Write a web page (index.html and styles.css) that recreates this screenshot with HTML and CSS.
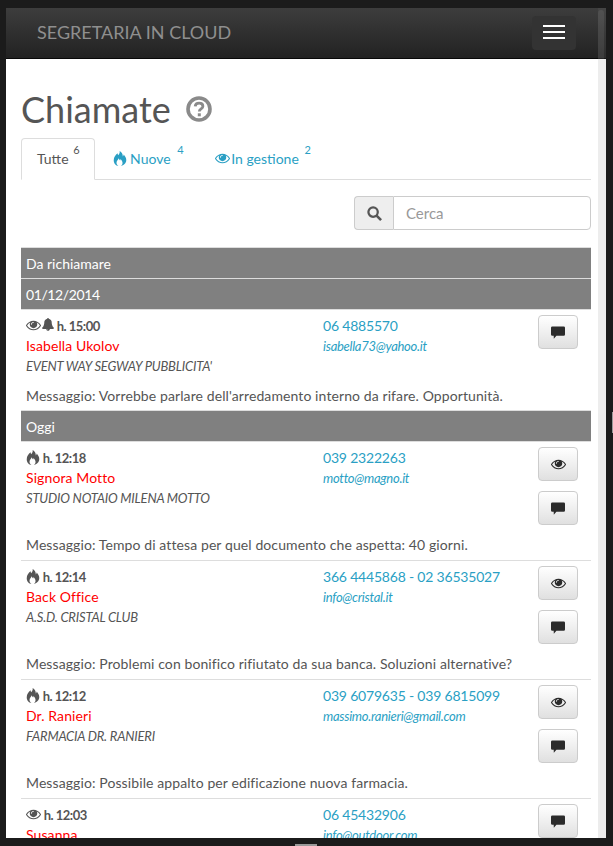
FILE: index.html
```html
<!DOCTYPE html>
<html lang="it">
<head>
    <meta charset="UTF-8">
    <meta name="viewport" content="width=device-width, initial-scale=1.0">
    <title>Segretaria in Cloud - Chiamate</title>
    <link rel="stylesheet" href="styles.css">
</head>
<body>
    <svg class="sprite" xmlns="http://www.w3.org/2000/svg">
        <symbol id="i-eye" viewBox="0 256 1792 1280">
            <path d="M1664 960q-152-236-381-353 61 104 61 225 0 185-131.5 316.5t-316.5 131.5-316.5-131.5-131.5-316.5q0-121 61-225-229 117-381 353 133 205 333.5 326.5t434.5 121.5 434.5-121.5 333.5-326.5zm-720-384q0-20-14-34t-34-14q-125 0-214.5 89.5t-89.5 214.5q0 20 14 34t34 14 34-14 14-34q0-86 61-147t147-61q20 0 34-14t14-34zm848 384q0 34-20 69-140 230-376.5 368.5t-499.5 138.5-499.5-139-376.5-368q-20-35-20-69t20-69q140-229 376.5-368t499.5-139 499.5 139 376.5 368q20 35 20 69z"/>
        </symbol>
        <symbol id="i-bell" viewBox="64 64 1664 1728">
            <path d="M912 1696q0-16-16-16-59 0-101.5-42.5t-42.5-101.5q0-16-16-16t-16 16q0 73 51.5 124.5t124.5 51.5q16 0 16-16zm816-288q0 52-38 90t-90 38h-448q0 106-75 181t-181 75-181-75-75-181h-448q-52 0-90-38t-38-90q50-42 91-88t85-119.5 74.5-158.5 50-206 19.5-260q0-152 117-282.5t307-158.5q-8-19-8-39 0-40 28-68t68-28 68 28 28 68q0 20-8 39 190 28 307 158.5t117 282.5q0 139 19.5 260t50 206 74.5 158.5 85 119.5 91 88z"/>
        </symbol>
        <symbol id="i-fire" viewBox="0 0 14 16">
            <path fill-rule="evenodd" d="M6.6 0c.5 2-.4 3.2-1.5 4.4C4.600 3.800 4.400 3.200 4.500 2.400 2.300 4.100.3 6.600.3 9.900.3 13.400 2.700 16 5.300 16c-1.300-1-2-2.200-2-3.500 0-1.900 1.500-3 2.300-4.800.3 1.200 1 1.600 1.500 2.500.3-.5.400-1 .3-1.700 1.600 1.400 2.300 2.700 2.300 4.200 0 1.300-.7 2.400-1.900 3.300 3-.4 5.900-2.800 5.900-6.300 0-2.600-1.500-4.300-2.700-5.900-.1.900-.4 1.500-1 2C10.100 3.500 8.800 1.200 6.600 0z"/>
        </symbol>
        <symbol id="i-comment" viewBox="0 0 16 14">
            <path d="M1.500 0h13A1.500 1.500 0 0 1 16 1.500v7.700a1.500 1.500 0 0 1-1.500 1.500H6.200L3.200 14l-.1-3.300H1.500A1.500 1.500 0 0 1 0 9.200V1.500A1.500 1.500 0 0 1 1.500 0z"/>
        </symbol>
    </svg>

    <div class="window">
        <nav class="navbar">
            <a class="brand" href="#">Segretaria in Cloud</a>
            <button class="navbar-toggle" type="button">
                <span class="icon-bar"></span>
                <span class="icon-bar"></span>
                <span class="icon-bar"></span>
            </button>
        </nav>

        <div class="container">
            <h1 class="page-title">
                Chiamate
                <svg class="help-icon" viewBox="0 0 26 26">
                    <circle cx="13" cy="13" r="11" fill="none" stroke="currentColor" stroke-width="3.600"/>
                    <path d="M9.200 10.400c.2-2.100 1.800-3.200 3.900-3.200 2.200 0 3.800 1.200 3.800 3 0 2.700-3.600 2.600-3.600 5.200" fill="none" stroke="currentColor" stroke-width="2.800"/>
                    <rect x="11.800" y="17.300" width="3" height="3"/>
                </svg>
            </h1>

            <ul class="tabs">
                <li class="tab active"><a href="#">Tutte <sup>6</sup></a></li>
                <li class="tab tab-new"><a href="#"><svg class="icon"><use href="#i-fire"/></svg> Nuove <sup>4</sup></a></li>
                <li class="tab tab-managed"><a href="#"><svg class="icon icon-eye"><use href="#i-eye"/></svg> In gestione <sup>2</sup></a></li>
            </ul>

            <div class="search-row">
                <div class="search-group">
                    <span class="search-addon">
                        <svg viewBox="0 0 16 16" width="15" height="15">
                            <circle cx="6.500" cy="6.500" r="5" fill="none" stroke="currentColor" stroke-width="2.400"/>
                            <path d="M10.200 10.200 15 15" fill="none" stroke="currentColor" stroke-width="2.800"/>
                        </svg>
                    </span>
                    <input class="search-input" type="text" placeholder="Cerca">
                </div>
            </div>

            <div class="call-list">
                <div class="section-head">Da richiamare</div>
                <div class="section-head section-date">01/12/2014</div>

                <div class="call call-single">
                    <div class="call-info">
                        <div class="call-time"><svg class="icon icon-eye"><use href="#i-eye"/></svg><svg class="icon icon-bell"><use href="#i-bell"/></svg> h. 15:00</div>
                        <div class="call-name">Isabella Ukolov</div>
                        <div class="call-company">EVENT WAY SEGWAY PUBBLICITA'</div>
                    </div>
                    <div class="call-contact">
                        <a class="call-phone" href="#">06 4885570</a>
                        <a class="call-mail" href="#">isabella73@yahoo.it</a>
                    </div>
                    <div class="call-actions">
                        <button class="btn" type="button"><svg class="btn-comment"><use href="#i-comment"/></svg></button>
                    </div>
                    <p class="call-message">Messaggio: Vorrebbe parlare dell'arredamento interno da rifare. Opportunità.</p>
                </div>

                <div class="section-head">Oggi</div>

                <div class="call">
                    <div class="call-info">
                        <div class="call-time"><svg class="icon"><use href="#i-fire"/></svg> h. 12:18</div>
                        <div class="call-name">Signora Motto</div>
                        <div class="call-company">STUDIO NOTAIO MILENA MOTTO</div>
                    </div>
                    <div class="call-contact">
                        <a class="call-phone" href="#">039 2322263</a>
                        <a class="call-mail" href="#">motto@magno.it</a>
                    </div>
                    <div class="call-actions">
                        <button class="btn" type="button"><svg class="btn-eye"><use href="#i-eye"/></svg></button>
                        <button class="btn" type="button"><svg class="btn-comment"><use href="#i-comment"/></svg></button>
                    </div>
                    <p class="call-message">Messaggio: Tempo di attesa per quel documento che aspetta: 40 giorni.</p>
                </div>

                <div class="call">
                    <div class="call-info">
                        <div class="call-time"><svg class="icon"><use href="#i-fire"/></svg> h. 12:14</div>
                        <div class="call-name">Back Office</div>
                        <div class="call-company">A.S.D. CRISTAL CLUB</div>
                    </div>
                    <div class="call-contact">
                        <a class="call-phone" href="#">366 4445868 - 02 36535027</a>
                        <a class="call-mail" href="#">info@cristal.it</a>
                    </div>
                    <div class="call-actions">
                        <button class="btn" type="button"><svg class="btn-eye"><use href="#i-eye"/></svg></button>
                        <button class="btn" type="button"><svg class="btn-comment"><use href="#i-comment"/></svg></button>
                    </div>
                    <p class="call-message">Messaggio: Problemi con bonifico rifiutato da sua banca. Soluzioni alternative?</p>
                </div>

                <div class="call">
                    <div class="call-info">
                        <div class="call-time"><svg class="icon"><use href="#i-fire"/></svg> h. 12:12</div>
                        <div class="call-name">Dr. Ranieri</div>
                        <div class="call-company">FARMACIA DR. RANIERI</div>
                    </div>
                    <div class="call-contact">
                        <a class="call-phone" href="#">039 6079635 - 039 6815099</a>
                        <a class="call-mail" href="#">massimo.ranieri@gmail.com</a>
                    </div>
                    <div class="call-actions">
                        <button class="btn" type="button"><svg class="btn-eye"><use href="#i-eye"/></svg></button>
                        <button class="btn" type="button"><svg class="btn-comment"><use href="#i-comment"/></svg></button>
                    </div>
                    <p class="call-message">Messaggio: Possibile appalto per edificazione nuova farmacia.</p>
                </div>

                <div class="call">
                    <div class="call-info">
                        <div class="call-time"><svg class="icon icon-eye"><use href="#i-eye"/></svg> h. 12:03</div>
                        <div class="call-name">Susanna</div>
                    </div>
                    <div class="call-contact">
                        <a class="call-phone" href="#">06 45432906</a>
                        <a class="call-mail" href="#">info@outdoor.com</a>
                    </div>
                    <div class="call-actions">
                        <button class="btn" type="button"><svg class="btn-comment"><use href="#i-comment"/></svg></button>
                    </div>
                </div>
            </div>
        </div>

        <div class="scrollbar"><div class="scrollbar-thumb"></div></div>
    </div>

    <div class="handle-right"></div>
    <div class="handle-bottom"></div>
</body>
</html>
```

FILE: styles.css
```css
* {
    margin: 0;
    padding: 0;
    box-sizing: border-box;
}

html, body {
    height: 100%;
    overflow: hidden;
}

body {
    position: relative;
    font-family: 'Lato', 'Liberation Sans', sans-serif;
    font-size: 14px;
    line-height: 20px;
    background: #1b1b1b;
    color: #555;
    padding: 8px 7px 8px 6px;
}

a {
    text-decoration: none;
    color: #2a9fc4;
}

.sprite {
    display: none;
}

.window {
    position: relative;
    height: 830px;
    background: #fff;
    overflow: hidden;
}

/* navbar */
.navbar {
    height: 51px;
    display: flex;
    align-items: center;
    justify-content: space-between;
    padding: 0 30px 1px 31px;
    background: linear-gradient(#3d3d3d, #222);
    border-bottom: 1px solid #080808;
}

.brand {
    font-size: 18px;
    color: #8f8f8f;
    text-transform: uppercase;
    margin-top: -2px;
}

.navbar-toggle {
    width: 44px;
    height: 34px;
    padding: 9px 11px;
    display: flex;
    flex-direction: column;
    gap: 4px;
    background: #333;
    border: none;
    border-radius: 4px;
}

.icon-bar {
    display: block;
    height: 2px;
    width: 22px;
    background: #fff;
}

.container {
    padding: 0 15px;
}

/* title */
.page-title {
    display: flex;
    align-items: center;
    gap: 15px;
    margin-top: 24px;
    margin-bottom: 4px;
    height: 51px;
    font-size: 36px;
    font-weight: 400;
    line-height: 40px;
    color: #555;
}

.help-icon {
    width: 26px;
    height: 26px;
    color: #8a8a8a;
    fill: #8a8a8a;
}

/* tabs */
.tabs {
    display: flex;
    list-style: none;
    height: 42px;
    border-bottom: 1px solid #ddd;
}

.tab {
    margin-right: 2px;
    height: 42px;
}

.tab a {
    display: block;
    height: 42px;
    padding: 10px 15px;
    border: 1px solid transparent;
    border-radius: 4px 4px 0 0;
}

.tab.active a {
    background: #fff;
    color: #555;
    border-color: #ddd #ddd #fff;
    padding-right: 14px;
}

.tab sup {
    font-size: 11px;
    line-height: 0;
    margin-left: 1px;
    position: relative;
    top: -4px;
    vertical-align: super;
}

.tab-new a {
    padding-right: 12px;
}

.tab-new sup {
    margin-left: 3px;
}

.tab-managed .icon-eye {
    margin-right: -2px;
}

.tab-managed sup {
    margin-left: 2px;
}

.icon {
    width: 14px;
    height: 15px;
    fill: currentColor;
    vertical-align: -2px;
}

.icon-eye {
    width: 15px;
    height: 12px;
    vertical-align: 0;
}

.icon-bell {
    width: 12px;
    height: 13px;
    margin-left: 1px;
    vertical-align: 0;
}

/* search */
.search-row {
    display: flex;
    justify-content: flex-end;
    margin: 16px 0 17px;
}

.search-group {
    display: flex;
    width: 237px;
    height: 34px;
}

.search-addon {
    width: 39px;
    display: flex;
    align-items: center;
    justify-content: center;
    background: #eee;
    border: 1px solid #ccc;
    border-right: 0;
    border-radius: 4px 0 0 4px;
    color: #555;
}

.search-input {
    flex: 1;
    min-width: 0;
    padding: 6px 12px;
    font-family: inherit;
    font-size: 15px;
    color: #555;
    border: 1px solid #ccc;
    border-radius: 0 4px 4px 0;
    outline: none;
}

.search-input::placeholder {
    color: #999;
}

/* list */
.call-list {
    border-top: 1px solid #ddd;
}

.section-head {
    height: 31px;
    padding: 6px 5px 0;
    background: #808080;
    color: #fff;
    border-bottom: 1px solid #ddd;
}

.section-date {
    letter-spacing: -0.4px;
}

.call {
    display: grid;
    grid-template-columns: 297px 215px 40px;
    padding: 5px 13px 5px 5px;
    border-bottom: 1px solid #ddd;
}

.call-single {
    padding-bottom: 4px;
}

.call-info {
    margin-bottom: 10px;
}

.call-time {
    font-size: 13px;
    font-weight: 700;
    height: 21px;
    padding-top: 1px;
    letter-spacing: -0.5px;
}

.call-name {
    color: #f00;
    letter-spacing: 0.1px;
}

.call-company {
    font-size: 13px;
    font-style: italic;
    letter-spacing: -0.2px;
}

.call-phone {
    display: block;
    font-size: 14px;
    letter-spacing: -0.2px;
    padding-top: 1px;
}

.call-mail {
    display: block;
    font-size: 13px;
    font-style: italic;
    letter-spacing: -0.28px;
}

.call-actions {
    display: flex;
    flex-direction: column;
}

.btn {
    width: 40px;
    height: 34px;
    margin-bottom: 10px;
    display: flex;
    align-items: center;
    justify-content: center;
    background: linear-gradient(#fff, #e0e0e0);
    border: 1px solid #ccc;
    border-radius: 4px;
    fill: #2b2b2b;
}

.btn-eye {
    width: 15px;
    height: 12px;
}

.btn-comment {
    width: 14px;
    height: 13px;
}

.call-message {
    grid-column: 1 / -1;
    height: 20px;
    white-space: nowrap;
    letter-spacing: 0.1px;
}

/* overlay scrollbar */
.scrollbar {
    position: absolute;
    top: 0;
    right: 0;
    bottom: 0;
    width: 8px;
    background: rgba(120, 120, 120, 0.14);
}

.scrollbar-thumb {
    position: absolute;
    top: 2px;
    right: 2px;
    left: 0;
    height: 405px;
    border-radius: 3px;
    background: rgba(255, 255, 255, 0.07);
}

/* window frame handles */
.handle-right {
    position: absolute;
    left: 612px;
    top: 412px;
    width: 1px;
    height: 21px;
    background: #999;
}

.handle-bottom {
    position: absolute;
    left: 295px;
    top: 844px;
    width: 22px;
    height: 2px;
    background: #999;
}
```
